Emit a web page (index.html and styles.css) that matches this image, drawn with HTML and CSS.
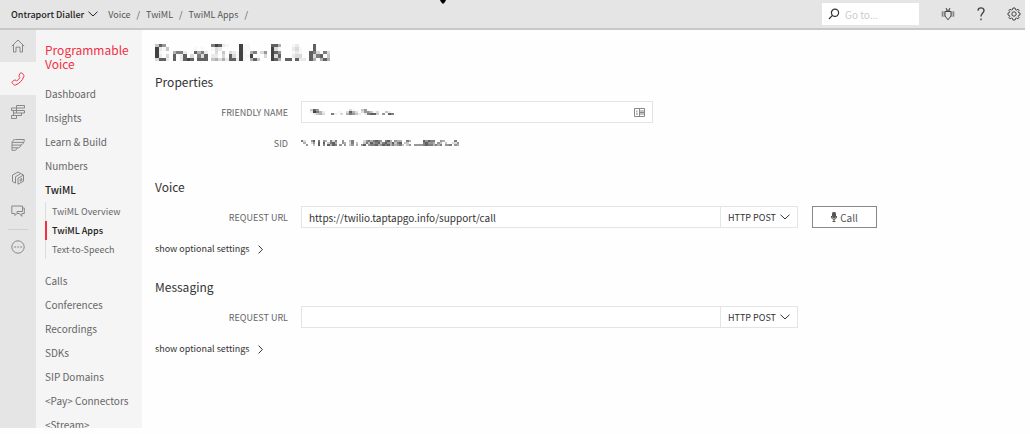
FILE: index.html
```html
<!DOCTYPE html>
<html lang="en">

<head>
    <meta charset="UTF-8">
    <meta name="viewport" content="width=device-width, initial-scale=1.0">
    <title>TwiML Apps - Ontraport Dialler</title>
    <link rel="stylesheet" href="styles.css">
</head>

<body>

    <header class="topbar">
        <button type="button" class="project">
            Ontraport Dialler
            <svg class="chevron" viewBox="0 0 10 6"><path d="M0.5 0.7 5 5 9.5 0.7"/></svg>
        </button>
        <nav class="breadcrumb">
            <a href="#">Voice</a><span>/</span>
            <a href="#">TwiML</a><span>/</span>
            <a href="#">TwiML Apps</a><span>/</span>
        </nav>
        <svg class="pin" viewBox="0 0 6 4"><path d="M0 0H6L5 2 3 4 1 2Z"/></svg>
        <label class="search">
            <svg class="icon-search" viewBox="0 0 12 12"><circle cx="7" cy="4.8" r="3.6"/><path d="M4.4 7.4 1 11"/></svg>
            <input type="text" placeholder="Go to..." aria-label="Go to">
        </label>
        <div class="tools">
            <button type="button" aria-label="Debugger">
                <svg class="icon" viewBox="0 0 14 14"><path d="M4 4.5H10V9L7 12.8 4 9ZM5 4.5C5 2.6 9 2.6 9 4.5M5 1 6 3M9 1 8 3"/><path class="thin" d="M1 5H4M1 7H4M1 9H4M10 5H13M10 7H13M10 9H13M1.2 4.5V9.5M12.8 4.5V9.5"/></svg>
            </button>
            <button type="button" aria-label="Help">
                <svg class="icon icon-bold" viewBox="0 0 14 14"><path d="M4 3.6C4.2 0 10 0 10 3.6 10 6 7 6.2 7 9.4M7 11.6V13.2"/></svg>
            </button>
            <button type="button" aria-label="Settings">
                <svg class="icon" viewBox="0 0 14 14"><path d="M5.9 1H8.1L8.5 2.7 9.5 3.1 11 2.2 12.1 3.3 11.2 4.7 11.6 5.6 13 6V8L11.6 8.4 11.2 9.3 12.1 10.7 11 11.8 9.5 11 8.5 11.4 8.1 13H5.9L5.5 11.4 4.5 11 3 11.8 1.9 10.7 2.8 9.3 2.4 8.4 1 8V6L2.4 5.6 2.8 4.7 1.9 3.3 3 2.2 4.5 3.1 5.5 2.7Z"/><circle cx="7" cy="7" r="2.2"/></svg>
            </button>
        </div>
    </header>

    <div class="layout">

        <nav class="rail">
            <a href="#" aria-label="Home">
                <svg class="icon" viewBox="0 0 14 14"><path d="M0.8 7.2 7 1 13.2 7.2M2.5 6V13H5V8.2H9V13H11.5V6"/></svg>
            </a>
            <a href="#" class="active" aria-label="Programmable Voice">
                <svg class="icon" viewBox="0 0 14 14"><path d="M9 1.4C9.6 0.8 10.4 0.8 11 1.2L12.4 2.4C13 3 13.1 3.8 12.8 4.6 11.4 8.4 8.4 11.6 4.6 13 3.8 13.3 3 13 2.4 12.4L1.3 11.2C0.8 10.6 0.9 9.8 1.5 9.4L3.5 8.2C4 7.9 4.6 8 5 8.4L5.6 9C7 8.2 8.2 6.9 8.9 5.6L8.3 5C7.9 4.6 7.8 4 8.1 3.5Z"/></svg>
            </a>
            <a href="#" aria-label="Studio">
                <svg class="icon" viewBox="0 0 14 14"><path d="M5.5 0.5H13.5V3H5.5ZM0.5 3H5.5V5.5H0.5ZM5.5 5.5H13.5V8H5.5ZM2.5 8H5.5M2.5 5.5V8M2.5 8V10.5H10.5V8M0.5 10.5H5.5V13.5H0.5Z"/></svg>
            </a>
            <a href="#" aria-label="Flex">
                <svg class="icon" viewBox="0 0 14 14"><path d="M13.3 1.5H4.5C2.5 1.5 1 3 1 5V12.5H2.5C5 12.5 6 11.3 6 9.8H7.2C8.8 9.8 9.6 8.6 9.8 7 12 6.4 13.3 4.5 13.3 1.5ZM1.2 4.4H12.5M1 7.1H9.8M1 9.8H6"/></svg>
            </a>
            <a href="#" aria-label="Marketplace">
                <svg class="icon" viewBox="0 0 14 14"><path d="M4.5 12.2 1.5 10.5V4L7 1 12.5 4V10.2L7 13.2V7.2L12.3 4.2M4.5 12V5.8L9.7 2.6M9.2 8.2 10.8 7.3V9.3L9.2 10.2Z"/></svg>
            </a>
            <a href="#" aria-label="Messaging">
                <svg class="icon" viewBox="0 0 14 14"><path d="M4 9.5H0.8V2H11.5V4M4 9.5V11.5L6 9.5H8.5L10.8 12.3V9.5H13.3V4H11.5V7.5H6V9.5"/></svg>
            </a>
            <hr>
            <a href="#" aria-label="All products">
                <svg class="icon" viewBox="0 0 14 14"><circle cx="7" cy="7" r="6.2"/><path class="dots" d="M4 7h0.1M7 7h0.1M10 7h0.1"/></svg>
            </a>
        </nav>

        <nav class="menu">
            <h2>Programmable Voice</h2>
            <ul>
                <li><a href="#">Dashboard</a></li>
                <li><a href="#">Insights</a></li>
                <li><a href="#">Learn &amp; Build</a></li>
                <li><a href="#">Numbers</a></li>
                <li>
                    <a href="#" class="current">TwiML</a>
                    <ul class="submenu">
                        <li><a href="#">TwiML Overview</a></li>
                        <li class="selected"><a href="#" class="current">TwiML Apps</a></li>
                        <li><a href="#">Text-to-Speech</a></li>
                    </ul>
                </li>
                <li><a href="#">Calls</a></li>
                <li><a href="#">Conferences</a></li>
                <li><a href="#">Recordings</a></li>
                <li><a href="#">SDKs</a></li>
                <li><a href="#">SIP Domains</a></li>
                <li><a href="#">&lt;Pay&gt; Connectors</a></li>
                <li><a href="#">&lt;Stream&gt;</a></li>
            </ul>
        </nav>

        <main class="content">
            <svg class="mosaic mosaic-title" id="appName" role="img" aria-label="Hidden app name"></svg>

            <form>
                <section class="properties">
                    <h3>Properties</h3>
                    <div class="row">
                        <label for="friendlyName">FRIENDLY NAME</label>
                        <div class="field field-name">
                            <svg class="mosaic mosaic-name" id="nameMask"></svg>
                            <input type="text" id="friendlyName">
                            <svg class="icon-card" viewBox="0 0 11 9"><path d="M0.5 0.5H10.5V8.5H0.5ZM5.5 0.5V8.5M6 3H10M6 4.5H10M6 6H10M2.8 2.5V4.5M2 6H4"/></svg>
                        </div>
                    </div>
                    <div class="row">
                        <span class="label">SID</span>
                        <svg class="mosaic mosaic-sid" id="sidMask"></svg>
                    </div>
                </section>

                <section>
                    <h3>Voice</h3>
                    <div class="row">
                        <label for="voiceUrl">REQUEST URL</label>
                        <div class="field field-url">
                            <input type="text" id="voiceUrl" value="https://twilio.taptapgo.info/support/call">
                            <div class="method">
                                <select aria-label="Voice request method">
                                    <option>HTTP POST</option>
                                    <option>HTTP GET</option>
                                </select>
                                <svg class="chevron" viewBox="0 0 10 6"><path d="M0.5 0.7 5 5 9.5 0.7"/></svg>
                            </div>
                        </div>
                        <button type="button" class="call">
                            <svg viewBox="0 0 6 10"><rect x="1.5" y="0" width="3" height="6" rx="1.5"/><path d="M0.5 4V5C0.5 8 5.5 8 5.5 5V4M3 7V9.5M1.5 9.5H4.5"/></svg>
                            Call
                        </button>
                    </div>
                    <button type="button" class="toggle">
                        show optional settings
                        <svg viewBox="0 0 5 9"><path d="M0.6 0.6 4.4 4.5 0.6 8.4"/></svg>
                    </button>
                </section>

                <section>
                    <h3>Messaging</h3>
                    <div class="row">
                        <label for="messagingUrl">REQUEST URL</label>
                        <div class="field field-url">
                            <input type="text" id="messagingUrl">
                            <div class="method">
                                <select aria-label="Messaging request method">
                                    <option>HTTP POST</option>
                                    <option>HTTP GET</option>
                                </select>
                                <svg class="chevron" viewBox="0 0 10 6"><path d="M0.5 0.7 5 5 9.5 0.7"/></svg>
                            </div>
                        </div>
                    </div>
                    <button type="button" class="toggle">
                        show optional settings
                        <svg viewBox="0 0 5 9"><path d="M0.6 0.6 4.4 4.5 0.6 8.4"/></svg>
                    </button>
                </section>
            </form>
        </main>
    </div>

    <script src="script.js"></script>
</body>

</html>
```
FILE: styles.css
```css
* {
    box-sizing: border-box;
}

body {
    margin: 0;
    height: 100vh;
    padding: 0 5px 6px 0;
    display: flex;
    flex-direction: column;
    overflow: hidden;
    background-color: #fefefe;
    color: #333;
    font-family: "Noto Sans CJK SC", "Noto Sans", sans-serif;
    font-size: 10px;
}

a {
    color: inherit;
    text-decoration: none;
}

button,
input,
select {
    font: inherit;
    color: inherit;
    background: none;
    border: none;
    padding: 0;
    outline: none;
}

button {
    cursor: pointer;
}

svg {
    flex: none;
    fill: none;
    stroke: currentColor;
    stroke-width: 1;
}

.icon {
    display: block;
    width: 14px;
    height: 14px;
}

.icon-bold {
    stroke-width: 1.4;
}

.thin {
    stroke-width: 0.6;
}

.chevron {
    width: 10px;
    height: 6px;
}

/* Top bar */
.topbar {
    flex: none;
    display: flex;
    align-items: center;
    height: 30px;
    padding: 0 4px 0 11px;
    background-color: #e5e5e5;
    border-bottom: 2px solid #c8c8c8;
}

.project {
    display: flex;
    align-items: center;
    gap: 4px;
    font-size: 9px;
    font-weight: 500;
    color: #222;
}

.breadcrumb {
    flex: 1;
    display: flex;
    gap: 6px;
    margin-left: 10px;
    font-size: 9px;
    color: #555;
}

.pin {
    position: absolute;
    top: 0;
    left: 43%;
    margin-left: -3px;
    width: 6px;
    height: 4px;
    fill: #000;
    stroke: none;
}

.search {
    display: flex;
    align-items: center;
    gap: 5px;
    width: 97px;
    height: 22px;
    padding: 0 6px;
    background-color: #fff;
}

.search input {
    min-width: 0;
    width: 100%;
}

.search input::placeholder {
    color: #ccc;
}

.icon-search {
    width: 12px;
    height: 12px;
    stroke-width: 1.2;
}

.tools {
    display: flex;
    gap: 19px;
    margin-left: 22px;
    color: #444;
}

/* Left navigation */
.layout {
    flex: 1;
    min-height: 0;
    display: flex;
    overflow: hidden;
}

.rail {
    flex: none;
    width: 36px;
    background-color: #e5e5e5;
    color: #888;
}

.rail a {
    display: flex;
    align-items: center;
    justify-content: center;
    height: 33px;
}

.rail a:first-child {
    height: 32px;
}

.rail .active {
    background-color: #f5f5f5;
    color: #f22f46;
}

.rail hr {
    width: 20px;
    margin: 2px auto 0;
    border: none;
    border-top: 1px solid #d0d0d0;
}

.dots {
    stroke-width: 1.6;
    stroke-linecap: round;
}

.menu {
    flex: none;
    width: 106px;
    padding: 13px 0 0 9px;
    background-color: #f5f5f5;
    color: #666;
}

.menu h2 {
    margin: 0 0 11px;
    font-size: 12px;
    font-weight: 400;
    line-height: 14px;
    color: #f22f46;
}

.menu ul {
    margin: 0;
    padding: 0;
    list-style: none;
    line-height: 24px;
    white-space: nowrap;
}

.menu .current {
    font-weight: 500;
    color: #222;
}

.menu .submenu {
    margin-bottom: 10px;
    font-size: 9px;
    line-height: 19px;
}

.submenu li {
    padding-left: 6px;
    border-left: 1px solid #ddd;
}

.submenu .selected {
    padding-left: 5px;
    border-left: 2px solid #f22f46;
}

/* App form */
.content {
    flex: 1;
    min-width: 0;
    padding: 14px 13px;
}

.mosaic {
    display: block;
    stroke: none;
    shape-rendering: crispEdges;
}

.mosaic-title {
    width: 175px;
    height: 17px;
}

.mosaic-name {
    width: 84px;
    height: 6px;
}

.mosaic-sid {
    width: 158px;
    height: 6px;
}

section {
    margin-bottom: 19px;
}

.properties {
    margin-bottom: 23px;
}

h3 {
    margin: 0 0 9px;
    font-size: 12px;
    font-weight: 400;
    line-height: 20px;
}

.mosaic-title + form {
    margin-top: 11px;
}

.row {
    display: flex;
    align-items: center;
    min-height: 22px;
}

.row + .row {
    margin-top: 9px;
}

.row label,
.label {
    flex: none;
    width: 133px;
    margin-right: 13px;
    font-size: 9px;
    text-align: right;
    color: #666;
}

.field {
    flex: 1;
    display: flex;
    align-items: center;
    height: 22px;
    border: 1px solid #e4e4e4;
    background-color: #fff;
}

.field input {
    flex: 1;
    min-width: 0;
}

.field-name {
    max-width: 352px;
    padding: 0 7px 0 8px;
}

.field-url {
    max-width: 497px;
    padding-left: 7px;
}

.icon-card {
    width: 11px;
    height: 9px;
    color: #888;
}

.method {
    display: flex;
    align-items: center;
    height: 100%;
    padding: 0 7px;
    border-left: 1px solid #e4e4e4;
    font-size: 9px;
}

.method select {
    appearance: none;
    margin-right: 4px;
}

.call {
    display: flex;
    align-items: center;
    justify-content: center;
    gap: 3px;
    width: 65px;
    height: 22px;
    margin-left: 14px;
    border: 1px solid #888;
    background-color: #fff;
    color: #555;
}

.call svg {
    width: 6px;
    height: 10px;
}

.call rect {
    fill: currentColor;
}

.toggle {
    display: flex;
    align-items: center;
    gap: 8px;
    margin-top: 12px;
    font-size: 9px;
    line-height: 18px;
}

.toggle svg {
    width: 5px;
    height: 9px;
}
```
FILE: script.js
```js
// Each digit is the darkness of one block: 0 is blank, 9 is nearly black
var masks = {
    appName: [
        '48600000000000007982100091100000088500012000080000',
        '92140000000101001320000091100000093100023100080000',
        '91000577200857200304032191057136098600012100873073',
        '92030802803073802203083191190103093800023300837804',
        '38820802898088804535288291058400098508808220850585'
    ],
    nameMask: [
        '4860000000000310046000000000',
        '2975200001103853036641300420',
        '0245300720305764202788406087'
    ],
    sidMask: [
        '730068070650737006004700003675787607850655007500000868770065000070',
        '050036080804785006503704004748678478658478044000000786650640400336',
        '006004080708587060604605068067785687857567404606666787757570667065'
    ]
};

function drawMosaic(id) {
    var svg = document.getElementById(id);
    var rows = masks[id];
    svg.setAttribute('viewBox', '0 0 ' + rows[0].length + ' ' + rows.length);
    svg.setAttribute('preserveAspectRatio', 'none');

    rows.forEach(function (row, y) {
        row.split('').forEach(function (level, x) {
            if (level === '0') return;
            var rect = document.createElementNS('http://www.w3.org/2000/svg', 'rect');
            rect.setAttribute('x', x);
            rect.setAttribute('y', y);
            rect.setAttribute('width', 1);
            rect.setAttribute('height', 1);
            rect.setAttribute('fill', '#222');
            rect.setAttribute('fill-opacity', Math.pow(level / 10, 1.5));
            svg.appendChild(rect);
        });
    });
}

Object.keys(masks).forEach(drawMosaic);
```
